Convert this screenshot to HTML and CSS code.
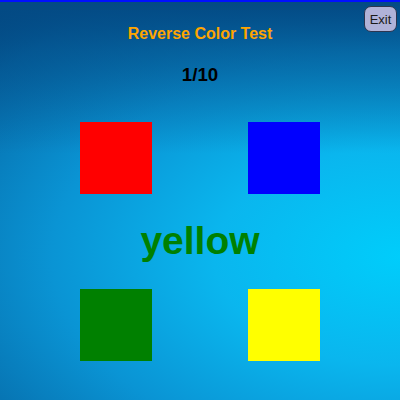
FILE: index.html
```html
<!DOCTYPE html>
<html>
<head>
<meta charset="utf-8">
<link rel="stylesheet" href="styles.css">
</head>
<body>
<div class="app">
  <button class="exit">Exit</button>
  <div class="title">Reverse Color Test</div>
  <div class="counter">1/10</div>
  <div class="grid">
    <div class="swatch red"></div>
    <div class="swatch blue"></div>
  </div>
  <div class="word">yellow</div>
  <div class="grid">
    <div class="swatch green"></div>
    <div class="swatch yellow"></div>
  </div>
</div>
</body>
</html>
```
FILE: styles.css
```css
html, body {
  margin: 0;
  padding: 0;
}
.app {
  position: relative;
  box-sizing: border-box;
  width: 400px;
  height: 400px;
  border-top: 2px solid #0010ff;
  background:
    linear-gradient(to bottom, #034a84 0%, rgba(3, 74, 132, 0.6) 12%, rgba(3, 74, 132, 0) 38%),
    radial-gradient(ellipse 145% 85% at 100% 64%, #00cdfb 0%, #0ab6ee 32%, #0a94d4 60%, #066aa8 88%, #044c86 100%);
  display: flex;
  flex-direction: column;
  align-items: center;
  font-family: "Liberation Sans", Arial, sans-serif;
}
.exit {
  position: absolute;
  top: 4px;
  right: 3px;
  width: 33px;
  height: 26px;
  padding: 0;
  border: 1px solid #2c3550;
  border-radius: 7px;
  background: #b0b2d8;
  color: #1a1a1a;
  font-family: "Liberation Sans", Arial, sans-serif;
  font-size: 13px;
}
.title {
  margin-top: 23px;
  font-size: 16px;
  line-height: 18px;
  font-weight: bold;
  color: #ffa500;
}
.counter {
  margin-top: 21px;
  font-size: 18.72px;
  line-height: 22px;
  font-weight: bold;
  color: #000;
}
.grid {
  display: grid;
  grid-template-columns: 72px 72px;
  column-gap: 96px;
  margin-top: 36px;
}
.word + .grid {
  margin-top: 26px;
}
.swatch {
  width: 72px;
  height: 72px;
}
.red { background: #ff0000; }
.blue { background: #0000ff; }
.green { background: #008000; }
.yellow { background: #ffff00; }
.word {
  margin-top: 24px;
  font-size: 39px;
  line-height: 45px;
  font-weight: bold;
  color: #008000;
}
```
